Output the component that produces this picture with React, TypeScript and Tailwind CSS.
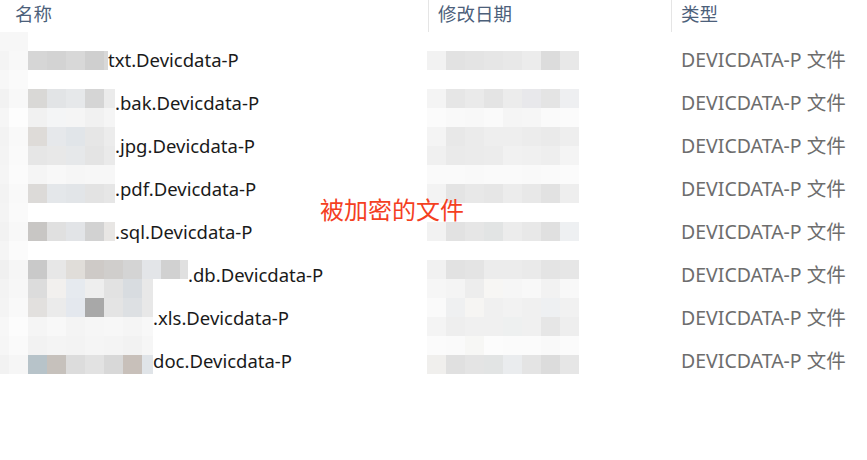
type Cell = [number, string]

const FONT = "font-['Noto_Sans','Noto_Sans_CJK_SC',sans-serif]"

// pixelated (mosaic) regions, one entry per 19px band starting at y=32
const nameMosaic: Cell[][] = [
    [[28, '#f7f7f7']],
    [[9, '#f4f4f4'], [19, '#f8f8f8'], [19, '#d6d6d6'], [19, '#d3d3d3'], [19, '#d8d8d8'], [19, '#cfcfcf'], [4, '#d8d8d8']],
    [[9, '#f7f7f7'], [19, '#fafafa']],
    [[9, '#f2f2f2'], [19, '#f8f8f8'], [19, '#d9d8d6'], [19, '#e2e4e6'], [19, '#e6e8ea'], [19, '#d5d5d5'], [11, '#ebebeb']],
    [[9, '#f6f6f6'], [19, '#fdfdfd'], [19, '#f1f1f1'], [19, '#f4f5f6'], [19, '#f5f5f5'], [19, '#f1f1f1'], [11, '#f5f5f5']],
    [[9, '#f3f3f3'], [19, '#f9f9f9'], [19, '#dedbd8'], [19, '#e6e8eb'], [19, '#e1e5e9'], [19, '#e6e6e6'], [11, '#ececec']],
    [[9, '#f4f4f4'], [19, '#fafafa'], [19, '#e6e6e6'], [19, '#e8e8e8'], [19, '#e6e8ea'], [19, '#e4e4e4'], [11, '#eaeaea']],
    [[9, '#f5f5f5'], [19, '#fbfbfb'], [19, '#f5f5f5'], [19, '#f8f8f8'], [19, '#f6f6f6'], [19, '#f7f7f7'], [11, '#f7f7f7']],
    [[9, '#f3f3f3'], [19, '#f9f9f9'], [19, '#dcdad8'], [19, '#e4e7ea'], [19, '#e2e5e8'], [19, '#e3e3e3'], [11, '#e6e6e6']],
    [[9, '#f4f4f4'], [19, '#fafafa']],
    [[9, '#f2f2f2'], [19, '#f8f8f8'], [19, '#c8c6c4'], [19, '#e0e0e0'], [19, '#e2e4e7'], [19, '#d2d2d2'], [11, '#e8e6e4']],
    [[9, '#f5f5f5'], [19, '#fbfbfb']],
    [[9, '#f0f0f0'], [19, '#f6f6f6'], [19, '#c9c9c9'], [19, '#e7e7e7'], [19, '#e0ddd9'], [19, '#cecac7'], [19, '#d0cecc'], [19, '#d4d4d4'], [19, '#e3e5e8'], [19, '#d1d1d1'], [8, '#e0e0e0']],
    [[9, '#f3f3f3'], [19, '#f7f7f7'], [19, '#dcdcdc'], [19, '#f2f0ee'], [19, '#e6eaef'], [19, '#eeeeee'], [19, '#e2e2e2'], [19, '#d8dce0'], [11, '#e8e8e8']],
    [[9, '#f4f4f4'], [19, '#f9f9f9'], [19, '#e2e0de'], [19, '#ebebeb'], [19, '#e4e8ee'], [19, '#a8a8a8'], [19, '#e4e4e4'], [19, '#dde0e3'], [11, '#e8e8e8']],
    [[9, '#f7f7f7'], [19, '#fcfcfc'], [19, '#f5f5f5'], [19, '#f8f8f8'], [19, '#f4f4f4'], [19, '#f6f6f6'], [19, '#f7f7f7'], [19, '#f5f5f5'], [11, '#f8f8f8']],
    [[9, '#f6f6f6'], [19, '#fafafa'], [19, '#f2f2f2'], [19, '#f4f4f4'], [19, '#f3f3f3'], [19, '#f5f5f5'], [19, '#f4f4f4'], [19, '#f2f2f2'], [11, '#f6f6f6']],
    [[9, '#f2f2f2'], [19, '#f6f6f6'], [19, '#b7c3c9'], [19, '#c6c1bc'], [19, '#dcdcdc'], [19, '#e2e2e2'], [19, '#d8d8d8'], [19, '#c8c0ba'], [11, '#e0e4e8']],
]

const dateMosaic: string[][] = [
    [],
    ['#f2f2f2', '#e2e2e2', '#e4e4e4', '#e6e6e6', '#e8e8e8', '#ececec', '#dcdcdc', '#e8e8e8'],
    [],
    ['#f4f4f4', '#e6e6e6', '#eaeaea', '#e4e4e4', '#ececec', '#e8e8eb', '#e4e4e4', '#eeeff1'],
    ['#fbfbfb', '#f9f9f9', '#f8f8f8', '#fafafa', '#f5f5f5', '#f6f6f6', '#fafafa', '#fbfbfb'],
    ['#f4f4f4', '#e8e8e8', '#ebebeb', '#eeeeee', '#eeeeee', '#ececec', '#eaeaea', '#eeeeee'],
    ['#f0f0f0', '#eaeaea', '#ebebeb', '#ececec', '#f1f1f1', '#f0f0f0', '#eeeeee', '#f4f4f4'],
    ['#fafafa', '#fafafa', '#f9f9f9', '#fafafa', '#fafafa', '#f9f9f9', '#fafafa', '#fbfbfb'],
    ['#f3f3f3', '#e4e4e4', '#e8e8e8', '#e6e6e6', '#ececec', '#e8e8e8', '#e2e2e2', '#eeeeee'],
    [],
    ['#f2f2f2', '#e2e2e2', '#e6e6e6', '#e2e4e4', '#ececec', '#e8e8e8', '#e0e0e0', '#eef0f2'],
    [],
    ['#f1f1f1', '#e2e2e2', '#e4e4e4', '#ececec', '#ececec', '#eaeaea', '#e4e4e4', '#e6e6e6'],
    ['#f6f6f6', '#f4f4f4', '#ededed', '#f7f6f4', '#f6f6f6', '#f8f8f8', '#f2f2f2', '#f8f8f8'],
    ['#fafafa', '#eff0f1', '#f6f5f3', '#f0f0f0', '#f2f2f2', '#f0f0f0', '#eef0f2', '#f1f1f1'],
    ['#f4f4f4', '#eeeeee', '#f0f0f0', '#f0f0f0', '#eef0f0', '#f0f0f0', '#e6e6e6', '#eeeeee'],
    ['#fbfbfb', '#fafafa', '#f7f7f5', '#fcfcfc', '#fbfbfb', '#fbfbfb', '#f9f9f9', '#fbfbfb'],
    ['#f0efed', '#e0e0e0', '#e4e4e4', '#e2e4e4', '#eaecee', '#e4e4e4', '#dcdcdc', '#e6e6e6'],
]

// hidden = width of the blurred part in front of the visible suffix
const files = [
    { hidden: 108, name: 'txt.Devicdata-P' },
    { hidden: 115, name: '.bak.Devicdata-P' },
    { hidden: 115, name: '.jpg.Devicdata-P' },
    { hidden: 115, name: '.pdf.Devicdata-P' },
    { hidden: 115, name: '.sql.Devicdata-P' },
    { hidden: 188, name: '.db.Devicdata-P' },
    { hidden: 153, name: '.xls.Devicdata-P' },
    { hidden: 153, name: 'doc.Devicdata-P' },
]

function Mosaic() {
    return (
        <div className="pointer-events-none absolute inset-x-0 top-[32px]">
            {nameMosaic.map((band, i) => (
                <div key={i} className="flex h-[19px]">
                    {band.map(([w, c], j) => (
                        <div key={j} className="h-full" style={{ width: w, background: c }} />
                    ))}
                    <div className="flex-1" />
                </div>
            ))}
            <div className="absolute left-[427px] top-0">
                {dateMosaic.map((band, i) => (
                    <div key={i} className="flex h-[19px]">
                        {band.map((c, j) => (
                            <div key={j} className="h-full w-[19px]" style={{ background: c }} />
                        ))}
                    </div>
                ))}
            </div>
        </div>
    )
}

export default function App() {
    return (
        <div className={`relative h-[460px] w-[867px] overflow-hidden bg-white ${FONT}`}>
            <div className="flex h-[38px] text-[18.5px] text-[#4c607a]">
                <div className="w-[428px] pl-[15px]">名称</div>
                <div className="flex w-[243px]">
                    <div className="h-[32px] w-px bg-[#e5e5e5]" />
                    <span className="pl-[9px]">修改日期</span>
                </div>
                <div className="flex flex-1">
                    <div className="h-[32px] w-px bg-[#e5e5e5]" />
                    <span className="pl-[9px]">类型</span>
                </div>
            </div>

            {files.map((f) => (
                <div key={f.name} className="flex h-[43px] items-center text-[18.5px]">
                    <div className="flex w-[428px] items-center">
                        <div className="shrink-0" style={{ width: f.hidden }} />
                        <span className="text-[#1a1a1a]">{f.name}</span>
                    </div>
                    <div className="w-[243px]" />
                    <div className="flex-1 whitespace-nowrap pl-[10px] text-[19.5px] text-[#6d6d6d]">
                        DEVICDATA-P 文件
                    </div>
                </div>
            ))}

            <Mosaic />

            <div className="absolute left-[320px] top-[192px] text-[24px] text-[#f4401f]">
                被加密的文件
            </div>
        </div>
    )
}
